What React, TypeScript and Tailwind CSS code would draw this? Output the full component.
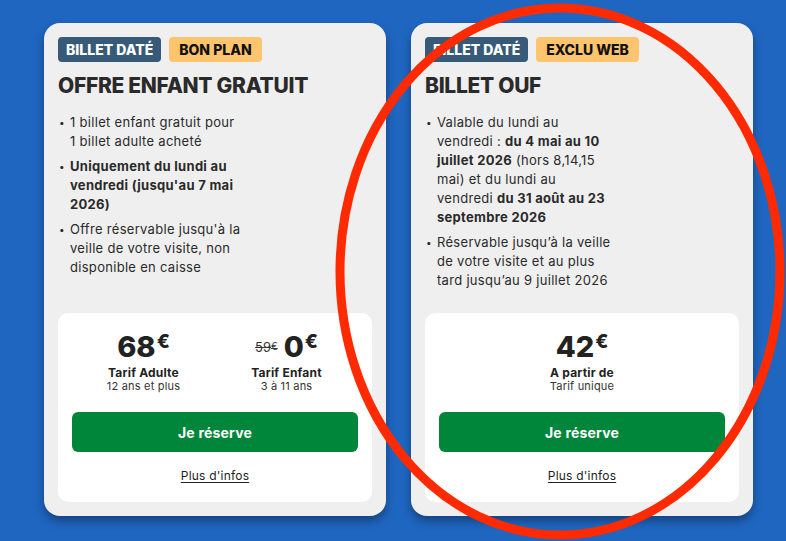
import React from 'react';

type Price = { old?: string; value: string; label: string; sub: string };

interface OfferProps {
  tags: string[];
  title: string;
  items: React.ReactNode[];
  prices: Price[];
}

function Badge({ text, tone }: { text: string; tone: 'dark' | 'yellow' }) {
  return (
    <span
      className={
        tone === 'dark'
          ? 'h-[25px] px-[8px] rounded-[4px] bg-[#375a78] text-white text-[14px] font-extrabold leading-[25px]'
          : 'h-[25px] px-[10px] rounded-[4px] bg-[#ffc56e] text-[#111] text-[14px] font-extrabold leading-[25px]'
      }
    >
      {text}
    </span>
  );
}

function PriceBlock({ p }: { p: Price }) {
  return (
    <div className="flex-1 flex flex-col items-center">
      <div className="flex items-start h-[34px]">
        {p.old && (
          <span className="mt-[11px] mr-[6px] text-[13px] text-[#333] line-through leading-none">
            {p.old}
            <span className="text-[10px] align-top">€</span>
          </span>
        )}
        <span className="text-[29px] font-extrabold leading-[34px] text-[#222]">{p.value}</span>
        <span className="text-[19px] font-extrabold leading-none text-[#222] mt-[2px] ml-[1px]">€</span>
      </div>
      <div className="text-[12px] font-bold text-[#222] leading-[15px] mt-[1px] tracking-[0.2px]">{p.label}</div>
      <div className="text-[11px] text-[#333] leading-[13px] tracking-[0.2px]">{p.sub}</div>
    </div>
  );
}

function OfferCard({ tags, title, items, prices }: OfferProps) {
  return (
    <div className="w-[342px] h-[493px] rounded-[16px] bg-[#efefef] p-[14px] flex flex-col shadow-[0_5px_10px_rgba(0,0,0,0.35)]">
      <div className="flex gap-[8px]">
        {tags.map((t, i) => (
          <Badge key={t} text={t} tone={i === 0 ? 'dark' : 'yellow'} />
        ))}
      </div>
      <h2 className="mt-[10px] text-[21px] font-extrabold text-[#2a2a2a] leading-[28px] tracking-[-0.3px]">{title}</h2>
      <ul className="mt-[13px] flex flex-col gap-[6px] text-[13px] leading-[19px] text-[#2a2a2a] tracking-[0.3px]">
        {items.map((it, i) => (
          <li key={i} className="flex">
            <span className="w-[12px] shrink-0 text-[10px] leading-[19px] pl-[1px]">•</span>
            <span className="whitespace-nowrap">{it}</span>
          </li>
        ))}
      </ul>
      <div className="mt-auto h-[189px] bg-white rounded-[10px] px-[14px] pt-[17px] flex flex-col">
        <div className="flex">
          {prices.map((p, i) => (
            <PriceBlock key={i} p={p} />
          ))}
        </div>
        <button className="mt-[19px] h-[40px] w-full rounded-[6px] bg-[#00863b] text-white text-[14px] font-bold tracking-[0.2px]">
          Je réserve
        </button>
        <a href="#" className="mt-[15px] self-center text-[12px] text-[#222] underline underline-offset-2 tracking-[0.2px]">
          Plus d'infos
        </a>
      </div>
    </div>
  );
}

export default function App() {
  return (
    <div
      className="relative w-[786px] h-[541px] overflow-hidden bg-[#1f66c1]"
      style={{ fontFamily: 'Inter, "Open Sans", sans-serif' }}
    >
      <div className="flex gap-[25px] pl-[44px] pt-[23px]">
        <OfferCard
          tags={['BILLET DATÉ', 'BON PLAN']}
          title="OFFRE ENFANT GRATUIT"
          items={[
            <>
              1 billet enfant gratuit pour
              <br />1 billet adulte acheté
            </>,
            <b className="font-bold">
              Uniquement du lundi au
              <br />
              vendredi (jusqu'au 7 mai
              <br />
              2026)
            </b>,
            <>
              Offre réservable jusqu'à la
              <br />
              veille de votre visite, non
              <br />
              disponible en caisse
            </>,
          ]}
          prices={[
            { value: '68', label: 'Tarif Adulte', sub: '12 ans et plus' },
            { old: '59', value: '0', label: 'Tarif Enfant', sub: '3 à 11 ans' },
          ]}
        />
        <OfferCard
          tags={['BILLET DATÉ', 'EXCLU WEB']}
          title="BILLET OUF"
          items={[
            <>
              Valable du lundi au
              <br />
              vendredi : <b className="font-bold">du 4 mai au 10</b>
              <br />
              <b className="font-bold">juillet 2026</b> (hors 8,14,15
              <br />
              mai) et du lundi au
              <br />
              vendredi <b className="font-bold">du 31 août au 23</b>
              <br />
              <b className="font-bold">septembre 2026</b>
            </>,
            <>
              Réservable jusqu’à la veille
              <br />
              de votre visite et au plus
              <br />
              tard jusqu’au 9 juillet 2026
            </>,
          ]}
          prices={[{ value: '42', label: 'A partir de', sub: 'Tarif unique' }]}
        />
      </div>
      <svg className="absolute inset-0 pointer-events-none" width="786" height="541" viewBox="0 0 786 541">
        <ellipse cx="560" cy="271.5" rx="220" ry="263.5" fill="none" stroke="#ff2a00" strokeWidth="9" />
      </svg>
    </div>
  );
}
